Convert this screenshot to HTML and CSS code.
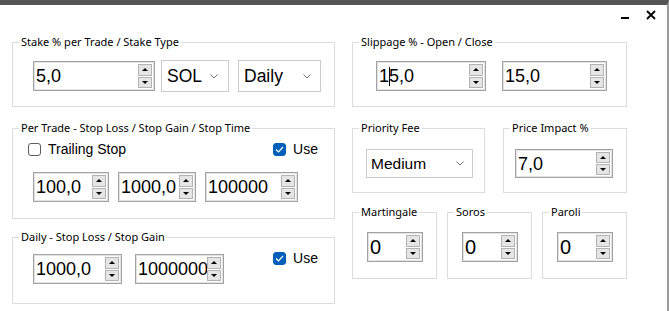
FILE: index.html
```html
<!DOCTYPE html>
<html lang="en">
<head>
  <meta charset="UTF-8" />
  <meta name="viewport" content="width=device-width, initial-scale=1.0" />
  <title>Trade Settings</title>
  <link rel="stylesheet" href="styles.css">
</head>
<body>
  <div class="window">
    <div class="titlebar">
      <button class="tb-btn" title="Minimize">
        <svg width="10" height="12" viewBox="0 0 10 12"><rect x="1" y="7" width="8" height="2" fill="#000"/></svg>
      </button>
      <button class="tb-btn" title="Close">
        <svg width="10" height="12" viewBox="0 0 10 12"><path d="M1 1 L9 9 M9 1 L1 9" stroke="#000" stroke-width="1.8" fill="none"/></svg>
      </button>
    </div>

    <div class="panels">
      <div class="col">
        <fieldset class="group">
          <legend>Stake % per Trade / Stake Type</legend>
          <div class="row row-stake">
            <div class="spin spin-stake"><span class="val">5,0</span><span class="arrows"><i class="up"></i><i class="down"></i></span></div>
            <div class="combo combo-sol">SOL<svg width="8" height="5" viewBox="0 0 8 5"><polyline points="0.5,0.5 4,4 7.5,0.5" fill="none" stroke="#707070"/></svg></div>
            <div class="combo combo-daily">Daily<svg width="8" height="5" viewBox="0 0 8 5"><polyline points="0.5,0.5 4,4 7.5,0.5" fill="none" stroke="#707070"/></svg></div>
          </div>
        </fieldset>

        <fieldset class="group group-trade">
          <legend>Per Trade - Stop Loss / Stop Gain / Stop Time</legend>
          <div class="opts">
            <label class="check"><span class="cb"></span>Trailing Stop</label>
            <label class="check check-use"><span class="cb on"><svg width="9" height="7" viewBox="0 0 9 7"><polyline points="1,3.5 3.5,6 8,1" fill="none" stroke="#fff" stroke-width="1.2"/></svg></span>Use</label>
          </div>
          <div class="row row-trade">
            <div class="spin spin-loss"><span class="val">100,0</span><span class="arrows"><i class="up"></i><i class="down"></i></span></div>
            <div class="spin spin-gain"><span class="val">1000,0</span><span class="arrows"><i class="up"></i><i class="down"></i></span></div>
            <div class="spin spin-time"><span class="val">100000</span><span class="arrows"><i class="up"></i><i class="down"></i></span></div>
          </div>
        </fieldset>

        <fieldset class="group group-daily">
          <legend>Daily - Stop Loss / Stop Gain</legend>
          <div class="row row-daily">
            <div class="spin spin-day"><span class="val">1000,0</span><span class="arrows"><i class="up"></i><i class="down"></i></span></div>
            <div class="spin spin-day"><span class="val">1000000</span><span class="arrows"><i class="up"></i><i class="down"></i></span></div>
            <label class="check check-use"><span class="cb on"><svg width="9" height="7" viewBox="0 0 9 7"><polyline points="1,3.5 3.5,6 8,1" fill="none" stroke="#fff" stroke-width="1.2"/></svg></span>Use</label>
          </div>
        </fieldset>
      </div>

      <div class="col">
        <fieldset class="group">
          <legend>Slippage % - Open / Close</legend>
          <div class="row row-slip">
            <div class="spin spin-open"><span class="val">1<span class="caret"></span>5,0</span><span class="arrows"><i class="up"></i><i class="down"></i></span></div>
            <div class="spin spin-close"><span class="val">15,0</span><span class="arrows"><i class="up"></i><i class="down"></i></span></div>
          </div>
        </fieldset>

        <div class="pair">
          <fieldset class="group group-fee">
            <legend>Priority Fee</legend>
            <div class="box-body">
              <div class="combo combo-fee">Medium<svg width="8" height="5" viewBox="0 0 8 5"><polyline points="0.5,0.5 4,4 7.5,0.5" fill="none" stroke="#707070"/></svg></div>
            </div>
          </fieldset>
          <fieldset class="group group-impact">
            <legend>Price Impact %</legend>
            <div class="box-body">
              <div class="spin spin-impact"><span class="val">7,0</span><span class="arrows"><i class="up"></i><i class="down"></i></span></div>
            </div>
          </fieldset>
        </div>

        <div class="trio">
          <fieldset class="group">
            <legend>Martingale</legend>
            <div class="box-body small">
              <div class="spin spin-count"><span class="val">0</span><span class="arrows"><i class="up"></i><i class="down"></i></span></div>
            </div>
          </fieldset>
          <fieldset class="group">
            <legend>Soros</legend>
            <div class="box-body small">
              <div class="spin spin-count"><span class="val">0</span><span class="arrows"><i class="up"></i><i class="down"></i></span></div>
            </div>
          </fieldset>
          <fieldset class="group">
            <legend>Paroli</legend>
            <div class="box-body small">
              <div class="spin spin-count"><span class="val">0</span><span class="arrows"><i class="up"></i><i class="down"></i></span></div>
            </div>
          </fieldset>
        </div>
      </div>
    </div>
  </div>
</body>
</html>
```

FILE: styles.css
```css
* {
  box-sizing: border-box;
}
body {
  margin: 0;
  background: #fff;
  font-family: 'Liberation Sans', Arial, sans-serif;
  color: #000;
}
.window {
  width: 669px;
  height: 311px;
  border-top: 5px solid #555;
  border-right: 2px solid #9b9b9b;
  overflow: hidden;
}
.titlebar {
  height: 29px;
  display: flex;
  justify-content: flex-end;
  align-items: flex-start;
  gap: 16px;
  padding: 5px 11px 0 0;
}
.tb-btn {
  background: none;
  border: none;
  padding: 0;
  line-height: 0;
}
.panels {
  display: grid;
  grid-template-columns: 323px 275px;
  column-gap: 17px;
  padding-left: 12px;
}
.col {
  display: flex;
  flex-direction: column;
}
.group {
  margin: 0;
  padding: 0;
  border: 1px solid #dcdcdc;
  min-width: 0;
}
.group legend {
  margin-left: 6px;
  padding: 0 2px;
  font: 11px/16px 'Noto Sans', sans-serif;
  color: #000;
}
.group-trade {
  margin-top: 13px;
}
.group-daily {
  margin-top: 10px;
}
.row {
  display: flex;
  align-items: center;
}
.row-stake {
  padding: 10px 0 14px 20px;
}
.row-stake .combo-sol {
  margin-left: 6px;
  width: 68px;
}
.row-stake .combo-daily {
  margin-left: 9px;
  width: 83px;
  padding-right: 9px;
}
.opts {
  display: flex;
  align-items: center;
  justify-content: space-between;
  height: 18px;
  margin-top: 4px;
  padding: 0 16px 0 15px;
}
.row-trade {
  margin-top: 14px;
  padding: 0 0 16px 20px;
  gap: 9px;
}
.row-daily {
  align-items: flex-start;
  padding: 5px 16px 19px 20px;
}
.row-daily .spin {
  margin-top: 4px;
}
.row-daily .spin + .spin {
  margin-left: 13px;
}
.row-daily .check-use {
  margin-left: auto;
}
.row-slip {
  padding: 11px 0 15px 23px;
  gap: 16px;
}
.pair {
  display: flex;
  gap: 18px;
  margin-top: 13px;
}
.group-fee {
  width: 133px;
}
.group-impact {
  width: 124px;
}
.group-fee .box-body {
  padding: 13px 0 14px 13px;
}
.group-impact .box-body {
  padding: 13px 0 14px 11px;
}
.trio {
  display: grid;
  grid-template-columns: repeat(3, 85px);
  gap: 10px;
  margin-top: 11px;
}
.box-body.small {
  padding: 12px 0 16px 14px;
}

/* numeric up-down */
.spin {
  display: flex;
  height: 30px;
  border: 1px solid #a2a2a2;
  box-shadow: inset 0 0 0 1px #e3e3e3;
  background: #fff;
}
.spin .val {
  flex: 1;
  padding-left: 2px;
  font-size: 18px;
  line-height: 28px;
  white-space: nowrap;
  overflow: hidden;
}
.caret {
  display: inline-block;
  width: 1px;
  height: 19px;
  margin-right: -1px;
  background: #000;
  vertical-align: -4px;
}
.arrows {
  width: 16px;
  display: flex;
  flex-direction: column;
  gap: 1px;
  padding: 2px 2px 2px 0;
}
.arrows i {
  flex: 1;
  display: flex;
  align-items: center;
  justify-content: center;
  background: #e5e5e5;
  border: 1px solid #b3b3b3;
}
.arrows i::before {
  content: "";
  border-left: 3px solid transparent;
  border-right: 3px solid transparent;
}
.arrows .up::before {
  border-bottom: 3px solid #000;
}
.arrows .down::before {
  border-top: 3px solid #000;
}
.spin-stake { width: 122px; }
.spin-loss { width: 76px; }
.spin-gain { width: 78px; }
.spin-time { width: 93px; }
.spin-day { width: 89px; }
.spin-open { width: 110px; }
.spin-close { width: 105px; }
.spin-impact { width: 98px; height: 29px; }
.spin-count { width: 56px; }
.spin-count .val {
  font-size: 20px;
}

/* dropdowns */
.combo {
  display: flex;
  align-items: center;
  height: 32px;
  border: 1px solid #cccccc;
  background: #fff;
  padding: 0 10px 0 5px;
  font-size: 17.5px;
}
.combo svg {
  margin-left: auto;
}
.combo-fee {
  width: 107px;
  height: 29px;
  font-size: 15.5px;
  padding: 0 8px 0 4px;
}

/* checkboxes */
.check {
  display: flex;
  align-items: center;
  font-size: 14px;
  line-height: 16px;
}
.cb {
  width: 13px;
  height: 13px;
  margin-right: 7px;
  border: 1px solid #5c5c5c;
  border-radius: 3px;
  background: #fff;
  display: flex;
  align-items: center;
  justify-content: center;
}
.cb.on {
  background: #005fb8;
  border-color: #005fb8;
}
```
